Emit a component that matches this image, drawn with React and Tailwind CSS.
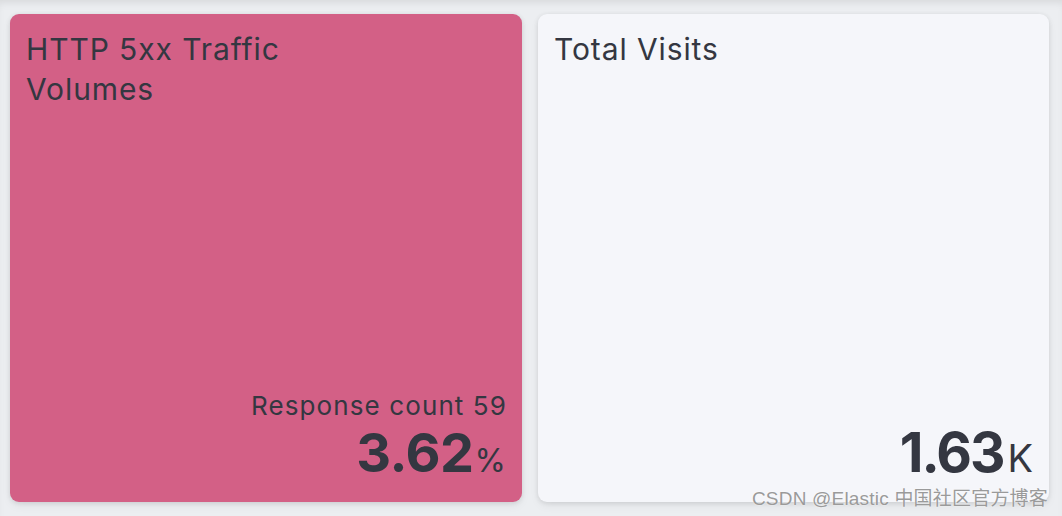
import React from "react";

export default function App() {
  return (
    <div
      className="relative w-[1062px] h-[516px] overflow-hidden bg-[#eceef1] shadow-[inset_0_6px_8px_-4px_rgba(0,0,0,0.10)]"
      style={{ fontFamily: "Inter, 'Noto Sans', sans-serif" }}
    >
      <div className="flex gap-[16px] pl-[10px] pt-[14px]">
        <div className="flex flex-col justify-between w-[512px] h-[488px] rounded-[9px] bg-[#d36086] text-[#343741] px-[16px] pt-[15px] pb-[22px] shadow-[0_1px_5px_rgba(0,0,0,0.10),0_4px_10px_rgba(0,0,0,0.05)]">
          <div className="text-[30px] leading-[40px] tracking-[0.9px] w-[300px]">HTTP 5xx Traffic Volumes</div>
          <div className="flex flex-col items-end">
            <div className="text-[26px] leading-[32px] tracking-[1.1px] mr-[-1px] mb-[4px]">Response count 59</div>
            <div className="flex items-baseline leading-none">
              <span className="text-[54px] font-bold tracking-[-0.5px]">3.62</span>
              <span className="text-[32px] ml-[1px]">%</span>
            </div>
          </div>
        </div>
        <div className="flex flex-col justify-between w-[511px] h-[488px] rounded-[9px] bg-[#f5f6fa] text-[#343741] px-[16px] pt-[15px] pb-[22px] shadow-[0_1px_5px_rgba(0,0,0,0.10),0_4px_10px_rgba(0,0,0,0.05)]">
          <div className="text-[30px] leading-[40px] tracking-[0.9px]">Total Visits</div>
          <div className="flex items-baseline justify-end leading-none">
            <span className="text-[55px] font-bold tracking-[-2px]">1.63</span>
            <span className="text-[38px] ml-[4px]">K</span>
          </div>
        </div>
      </div>
      <div
        className="absolute right-[14px] bottom-[6px] text-[19px] leading-[22px] tracking-[0.2px] text-[#9a9a9a] [text-shadow:0_0_2px_rgba(255,255,255,0.9)]"
        style={{ fontFamily: "'Liberation Sans', 'Noto Sans CJK SC', sans-serif" }}
      >
        CSDN @Elastic 中国社区官方博客
      </div>
    </div>
  );
}
